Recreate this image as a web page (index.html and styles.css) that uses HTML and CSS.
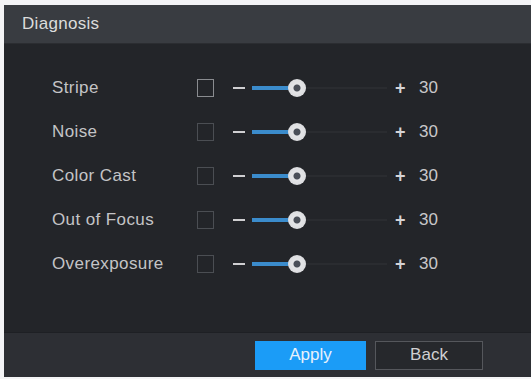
FILE: index.html
```html
<!DOCTYPE html>
<html>
<head>
<meta charset="utf-8">
<link rel="stylesheet" href="styles.css">
</head>
<body>
<div class="panel">
  <div class="header">Diagnosis</div>
  <div class="content">
    <div class="row">
      <span class="label">Stripe</span>
      <span class="check"></span>
      <span class="minus"></span>
      <span class="slider"><span class="fill"></span><span class="thumb"></span></span>
      <span class="plus">+</span>
      <span class="value">30</span>
    </div>
    <div class="row">
      <span class="label">Noise</span>
      <span class="check"></span>
      <span class="minus"></span>
      <span class="slider"><span class="fill"></span><span class="thumb"></span></span>
      <span class="plus">+</span>
      <span class="value">30</span>
    </div>
    <div class="row">
      <span class="label">Color Cast</span>
      <span class="check"></span>
      <span class="minus"></span>
      <span class="slider"><span class="fill"></span><span class="thumb"></span></span>
      <span class="plus">+</span>
      <span class="value">30</span>
    </div>
    <div class="row">
      <span class="label">Out of Focus</span>
      <span class="check"></span>
      <span class="minus"></span>
      <span class="slider"><span class="fill"></span><span class="thumb"></span></span>
      <span class="plus">+</span>
      <span class="value">30</span>
    </div>
    <div class="row">
      <span class="label">Overexposure</span>
      <span class="check"></span>
      <span class="minus"></span>
      <span class="slider"><span class="fill"></span><span class="thumb"></span></span>
      <span class="plus">+</span>
      <span class="value">30</span>
    </div>
  </div>
  <div class="footer">
    <button class="btn btn-apply">Apply</button>
    <button class="btn btn-back">Back</button>
  </div>
</div>
</body>
</html>
```

FILE: styles.css
```css
html, body {
  margin: 0;
  padding: 0;
  background: #f4f4f6;
}
body {
  padding: 5px 0 0 4px;
  font-family: "Liberation Sans", Arial, sans-serif;
}
.panel {
  width: 527px;
  height: 372px;
  display: flex;
  flex-direction: column;
  background: #232529;
}
.header {
  height: 38px;
  flex: none;
  background: #393c41;
  border-bottom: 1px solid #2b2d31;
  color: #dcdcdc;
  font-size: 17px;
  letter-spacing: 0.3px;
  padding-left: 18px;
  display: flex;
  align-items: center;
}
.content {
  flex: 1;
  padding-top: 22px;
  display: flex;
  flex-direction: column;
}
.row {
  height: 44px;
  display: flex;
  align-items: center;
}
.label {
  width: 145px;
  padding-left: 48px;
  color: #c4c4c6;
  font-size: 17px;
  letter-spacing: 0.4px;
}
.check {
  width: 15px;
  height: 16px;
  border: 1px solid #4b4e53;
  margin-left: 0;
}
.row:first-child .check {
  border-color: #8a8c90;
}
.minus {
  width: 12px;
  height: 2px;
  background: #cfcfd1;
  margin-left: 19px;
}
.slider {
  position: relative;
  width: 135px;
  height: 2px;
  background: #2a2c30;
  margin-left: 7px;
}
.fill {
  position: absolute;
  left: 0;
  top: -1px;
  width: 40px;
  height: 4px;
  background: #3b8ccc;
}
.thumb {
  position: absolute;
  left: 36px;
  top: -8px;
  width: 18px;
  height: 18px;
  border-radius: 50%;
  background: radial-gradient(circle, #4a4f58 0, #4a4f58 3px, #e4e5e7 4px, #d6d7da 100%);
}
.plus {
  margin-left: 8px;
  color: #d4d4d6;
  font-size: 18px;
  font-weight: bold;
  width: 16px;
}
.value {
  margin-left: 8px;
  color: #c8c8ca;
  font-size: 17px;
}
.footer {
  height: 44px;
  flex: none;
  background: #2d2f34;
  border-top: 1px solid #1e2024;
  display: flex;
  align-items: center;
  padding-left: 251px;
  gap: 9px;
}
.btn {
  width: 111px;
  height: 29px;
  font-family: "Liberation Sans", Arial, sans-serif;
  font-size: 17px;
  border: none;
  padding: 0;
}
.btn-apply {
  background: #1b9cf7;
  color: #e8f1fb;
}
.btn-back {
  width: 108px;
  background: #26282c;
  border: 1px solid #55575c;
  color: #d0d0d2;
}
```
